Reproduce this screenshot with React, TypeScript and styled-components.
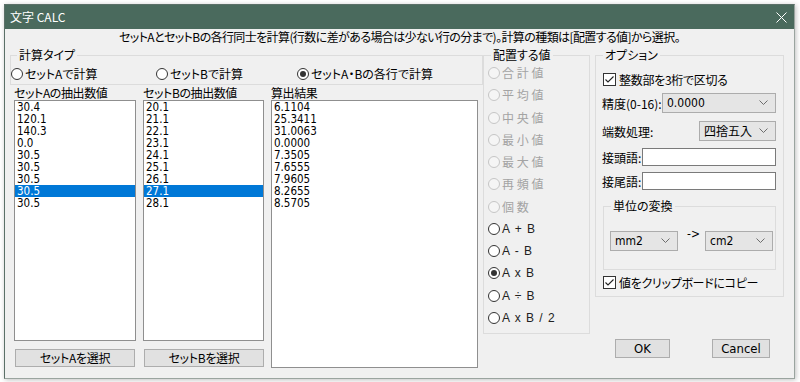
import React from 'react';
import styled, { createGlobalStyle } from 'styled-components';

const UI = `"Noto Sans CJK JP", "Noto Sans", sans-serif`;
const NARROW = `"Liberation Sans Narrow", "DejaVu Sans Condensed", "Noto Sans CJK JP", sans-serif`;
const SANS = `"Liberation Sans", Arial, sans-serif`;

const Global = createGlobalStyle`
  html, body { margin: 0; padding: 0; background: #ffffff; }
  body { font-family: ${UI}; font-size: 12px; font-weight: 400; color: #000; font-feature-settings: "palt"; }
  * { box-sizing: border-box; }
  #root { width: 800px; height: 382px; overflow: hidden; }
`;

const Page = styled.div`
  padding: 4px;
  width: 800px;
  height: 382px;
`;

const Window = styled.div`
  width: 791px;
  height: 375px;
  background: #f0f0f0;
  border: 1px solid #5b7068;
  border-right-color: #9aa49f;
  border-bottom-color: #9aa49f;
  box-shadow: 1px 1px 5px rgba(0, 0, 0, 0.25);
  display: flex;
  flex-direction: column;
`;

const TitleBar = styled.div`
  height: 24px;
  flex: none;
  background: #4a6a5d;
  color: #ffffff;
  display: flex;
  align-items: center;
  justify-content: space-between;
  padding: 0 7px 0 5px;
  font-size: 12px;
  line-height: 14px;
`;

const Header = styled.div`
  height: 16px;
  line-height: 16px;
  text-align: center;
  white-space: nowrap;
  letter-spacing: -0.6px;
`;

const Main = styled.div`
  display: grid;
  grid-template-columns: 473px 107px 194px;
  padding: 3px 0 0 5px;
  align-items: start;
`;

const Column = styled.div`
  display: flex;
  flex-direction: column;
`;

const RightColumn = styled(Column)`
  margin-left: 5px;
`;

const Group = styled.fieldset`
  margin: 0;
  padding: 0;
  min-width: 0;
  border: 1px solid #dcdcdc;
`;

const Legend = styled.legend<{ $ml?: number }>`
  padding: 0 2px;
  margin-left: ${p => p.$ml ?? 6}px;
  line-height: 14px;
  height: 14px;
  font-size: 12px;
`;

const TypeRow = styled.div`
  display: grid;
  grid-template-columns: 145px 141px auto;
  padding: 4px 0 2px 0;
  height: 22px;
  align-items: center;
`;

const RadioOption = styled.label<{ $h?: number; $disabled?: boolean }>`
  display: flex;
  align-items: center;
  gap: 2px;
  height: ${p => p.$h ?? 16}px;
  white-space: nowrap;
  color: ${p => (p.$disabled ? '#a3a3a3' : '#000')};
  line-height: 14px;
`;

const RadioDot = styled.span<{ $checked?: boolean; $disabled?: boolean }>`
  flex: none;
  width: 12px;
  height: 12px;
  border-radius: 50%;
  border: 1px solid ${p => (p.$disabled ? '#c6c6c6' : '#333333')};
  background: ${p => (p.$disabled ? '#f5f5f5' : '#ffffff')};
  display: inline-flex;
  align-items: center;
  justify-content: center;
  &::after {
    content: '';
    width: 6px;
    height: 6px;
    border-radius: 50%;
    background: #333333;
    display: ${p => (p.$checked ? 'block' : 'none')};
  }
`;

const OpText = styled.span`
  font-family: ${SANS};
  font-size: 12px;
  font-weight: 400;
  word-spacing: 2px;
  color: #222;
`;

const Lists = styled.div`
  display: grid;
  grid-template-columns: 122px 121px 207px;
  column-gap: 7px;
  padding-left: 4px;
`;

const ListCol = styled.div`
  display: flex;
  flex-direction: column;
`;

const ListLabel = styled.div`
  height: 15px;
  line-height: 15px;
  white-space: nowrap;
  letter-spacing: -0.4px;
`;

const ListBox = styled.div<{ $h: number }>`
  height: ${p => p.$h}px;
  background: #ffffff;
  border: 1px solid #8f8f8f;
  overflow: hidden;
`;

const ListItem = styled.div<{ $selected?: boolean }>`
  height: 12px;
  line-height: 12px;
  padding-left: 2px;
  font-family: ${NARROW};
  font-size: 11.5px;
  font-weight: 400;
  background: ${p => (p.$selected ? '#0078d7' : 'transparent')};
  color: ${p => (p.$selected ? '#ffffff' : '#000000')};
`;

const Button = styled.button<{ $w?: number }>`
  font-family: ${UI};
  font-feature-settings: "palt";
  font-size: 12px;
  font-weight: 400;
  color: #000;
  background: #e1e1e1;
  border: 1px solid #adadad;
  height: 19px;
  padding: 0;
  ${p => (p.$w ? `width: ${p.$w}px;` : '')}
  line-height: 16px;
`;

const SelectButton = styled(Button)`
  margin-top: 8px;
  margin-left: 1px;
  width: 120px;
  height: 18px;
  letter-spacing: -0.3px;
`;

const ValueList = styled.div`
  display: flex;
  flex-direction: column;
  padding: 0 0 4px 4px;
`;

const CheckRow = styled.label<{ $mt: number }>`
  display: flex;
  align-items: center;
  gap: 3px;
  height: 14px;
  margin: ${p => p.$mt}px 0 0 7px;
  white-space: nowrap;
  letter-spacing: -0.3px;
`;

const CheckBox = styled.span`
  flex: none;
  width: 13px;
  height: 13px;
  border: 1px solid #333333;
  background: #ffffff;
  display: inline-flex;
  align-items: center;
  justify-content: center;
`;

const FieldRow = styled.div<{ $mt: number; $h: number }>`
  display: flex;
  align-items: center;
  height: ${p => p.$h}px;
  margin: ${p => p.$mt}px 7px 0 6px;
  white-space: nowrap;
`;

const Combo = styled.div<{ $w: number }>`
  margin-left: auto;
  width: ${p => p.$w}px;
  height: 20px;
  background: #e5e5e5;
  border: 1px solid #acacac;
  display: flex;
  align-items: center;
  justify-content: space-between;
  padding: 0 7px 0 4px;
  flex: none;
`;

const ComboText = styled.span<{ $narrow?: boolean }>`
  font-family: ${p => (p.$narrow ? NARROW : UI)};
  font-size: 12px;
  line-height: 14px;
`;

const TextInput = styled.div`
  margin-left: auto;
  width: 134px;
  height: 18px;
  background: #ffffff;
  border: 1px solid #7a7a7a;
`;

const SubGroup = styled(Group)`
  margin: 9px 7px 0 7px;
`;

const UnitRow = styled.div`
  display: flex;
  align-items: flex-start;
  padding: 18px 0 18px 6px;
  height: 56px;
`;

const Arrow = styled.span`
  font-family: ${NARROW};
  font-size: 12px;
  line-height: 12px;
  margin: -3px 5px 0 9px;
`;

const UnitCombo = styled(Combo)`
  margin-left: 0;
`;

const ButtonRow = styled.div`
  display: flex;
  gap: 42px;
  padding-left: 20px;
  margin-top: 42px;
`;

const DlgButton = styled(Button)`
  font-family: ${NARROW};
  font-size: 13px;
`;

const Chevron = () => (
  <svg width="9" height="6" viewBox="0 0 9 6">
    <polyline points="0.5,0.5 4.5,4.5 8.5,0.5" fill="none" stroke="#6d6d6d" strokeWidth="1" />
  </svg>
);

const CheckMark = () => (
  <svg width="11" height="11" viewBox="0 0 11 11">
    <polyline points="1.5,5.5 4,8 9.5,2.5" fill="none" stroke="#222" strokeWidth="1.1" />
  </svg>
);

const CloseIcon = () => (
  <svg width="11" height="11" viewBox="0 0 11 11">
    <path d="M0.5 0.5 L10.5 10.5 M10.5 0.5 L0.5 10.5" stroke="#ffffff" strokeWidth="1" />
  </svg>
);

const listA = ['30.4', '120.1', '140.3', '0.0', '30.5', '30.5', '30.5', '30.5', '30.5'];
const listB = ['20.1', '21.1', '22.1', '23.1', '24.1', '25.1', '26.1', '27.1', '28.1'];
const listC = ['6.1104', '25.3411', '31.0063', '0.0000', '7.3505', '7.6555', '7.9605', '8.2655', '8.5705'];

const values: { label: string; disabled?: boolean; checked?: boolean; op?: boolean }[] = [
  { label: '合 計 値', disabled: true },
  { label: '平 均 値', disabled: true },
  { label: '中 央 値', disabled: true },
  { label: '最 小 値', disabled: true },
  { label: '最 大 値', disabled: true },
  { label: '再 頻 値', disabled: true },
  { label: '個 数', disabled: true },
  { label: 'A + B', op: true },
  { label: 'A - B', op: true },
  { label: 'A x B', op: true, checked: true },
  { label: 'A ÷ B', op: true },
  { label: 'A x B / 2', op: true },
];

const DataList = ({ label, items, selected, h }: { label: string; items: string[]; selected?: number; h: number }) => (
  <>
    <ListLabel>{label}</ListLabel>
    <ListBox $h={h}>
      {items.map((v, i) => (
        <ListItem key={i} $selected={i === selected}>
          {v}
        </ListItem>
      ))}
    </ListBox>
  </>
);

export default function App() {
  return (
    <Page>
      <Global />
      <Window>
        <TitleBar>
          <span>文字 CALC</span>
          <CloseIcon />
        </TitleBar>
        <Header>
          セットAとセットBの各行同士を計算(行数に差がある場合は少ない行の分まで)。計算の種類は[配置する値]から選択。
        </Header>
        <Main>
          <Column>
            <Group>
              <Legend $ml={6}>計算タイプ</Legend>
              <TypeRow>
                <RadioOption>
                  <RadioDot />
                  セットAで計算
                </RadioOption>
                <RadioOption>
                  <RadioDot />
                  セットBで計算
                </RadioOption>
                <RadioOption>
                  <RadioDot $checked />
                  セットA・Bの各行で計算
                </RadioOption>
              </TypeRow>
            </Group>
            <Lists>
              <ListCol>
                <DataList label="セットAの抽出数値" items={listA} selected={7} h={241} />
                <SelectButton>セットAを選択</SelectButton>
              </ListCol>
              <ListCol>
                <DataList label="セットBの抽出数値" items={listB} selected={7} h={241} />
                <SelectButton>セットBを選択</SelectButton>
              </ListCol>
              <ListCol>
                <DataList label="算出結果" items={listC} h={268} />
              </ListCol>
            </Lists>
          </Column>
          <Column>
            <Group>
              <Legend $ml={7}>配置する値</Legend>
              <ValueList>
                {values.map(v => (
                  <RadioOption key={v.label} $h={22.25} $disabled={v.disabled}>
                    <RadioDot $disabled={v.disabled} $checked={v.checked} />
                    {v.op ? <OpText>{v.label}</OpText> : v.label}
                  </RadioOption>
                ))}
              </ValueList>
            </Group>
          </Column>
          <RightColumn>
            <Group>
              <Legend $ml={7}>オプション</Legend>
              <CheckRow $mt={10}>
                <CheckBox>
                  <CheckMark />
                </CheckBox>
                整数部を3桁で区切る
              </CheckRow>
              <FieldRow $mt={7} $h={20}>
                精度(0-16):
                <Combo $w={114}>
                  <ComboText $narrow>0.0000</ComboText>
                  <Chevron />
                </Combo>
              </FieldRow>
              <FieldRow $mt={8} $h={20}>
                端数処理:
                <Combo $w={77}>
                  <ComboText>四捨五入</ComboText>
                  <Chevron />
                </Combo>
              </FieldRow>
              <FieldRow $mt={7} $h={18}>
                接頭語:
                <TextInput />
              </FieldRow>
              <FieldRow $mt={6} $h={18}>
                接尾語:
                <TextInput />
              </FieldRow>
              <SubGroup>
                <Legend $ml={7}>単位の変換</Legend>
                <UnitRow>
                  <UnitCombo $w={68}>
                    <ComboText $narrow>mm2</ComboText>
                    <Chevron />
                  </UnitCombo>
                  <Arrow>-&gt;</Arrow>
                  <UnitCombo $w={68}>
                    <ComboText $narrow>cm2</ComboText>
                    <Chevron />
                  </UnitCombo>
                </UnitRow>
              </SubGroup>
              <CheckRow $mt={5}>
                <CheckBox>
                  <CheckMark />
                </CheckBox>
                値をクリップボードにコピー
              </CheckRow>
              <div style={{ height: 7 }} />
            </Group>
            <ButtonRow>
              <DlgButton $w={55}>OK</DlgButton>
              <DlgButton $w={58}>Cancel</DlgButton>
            </ButtonRow>
          </RightColumn>
        </Main>
      </Window>
    </Page>
  );
}
